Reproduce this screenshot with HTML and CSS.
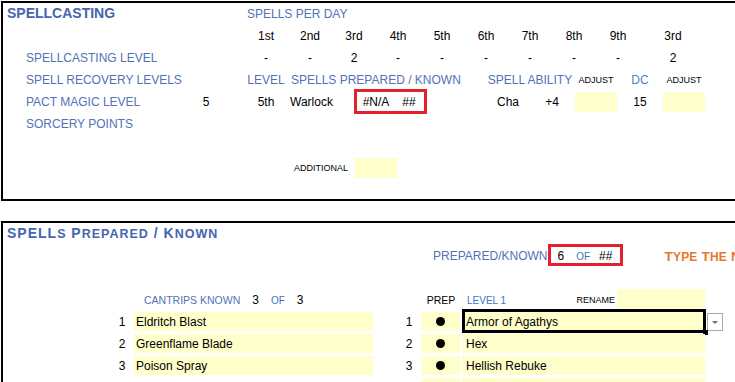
FILE: index.html
```html
<!DOCTYPE html>
<html lang="en">
<head>
    <meta charset="UTF-8">
    <meta name="viewport" content="width=device-width, initial-scale=1.0">
    <title>Spellcasting</title>
    <link rel="stylesheet" href="styles.css">
</head>
<body>
    <!-- Spellcasting block -->
    <section class="sheet spellcasting">
        <div class="row">
            <h1 class="title">SPELLCASTING</h1>
            <span class="head per-day">SPELLS PER DAY</span>
        </div>
        <div class="row">
            <span class="slot first">1st</span>
            <span class="slot">2nd</span>
            <span class="slot">3rd</span>
            <span class="slot">4th</span>
            <span class="slot">5th</span>
            <span class="slot">6th</span>
            <span class="slot">7th</span>
            <span class="slot">8th</span>
            <span class="slot">9th</span>
            <span class="pact-col">3rd</span>
        </div>
        <div class="row">
            <span class="label">SPELLCASTING LEVEL</span>
            <span class="slot first">-</span>
            <span class="slot">-</span>
            <span class="slot">2</span>
            <span class="slot">-</span>
            <span class="slot">-</span>
            <span class="slot">-</span>
            <span class="slot">-</span>
            <span class="slot">-</span>
            <span class="slot">-</span>
            <span class="pact-col">2</span>
        </div>
        <div class="row">
            <span class="label">SPELL RECOVERY LEVELS</span>
            <span class="head level">LEVEL</span>
            <span class="head known">SPELLS PREPARED / KNOWN</span>
            <span class="head ability">SPELL ABILITY</span>
            <span class="tiny adjust">ADJUST</span>
            <span class="head dc">DC</span>
            <span class="tiny adjust">ADJUST</span>
        </div>
        <div class="row">
            <span class="label">PACT MAGIC LEVEL</span>
            <span class="lone">5</span>
            <span class="slot first">5th</span>
            <span class="warlock">Warlock</span>
            <span class="flag">
                <span>#N/A</span>
                <span>##</span>
            </span>
            <span class="cha">Cha</span>
            <span class="slot">+4</span>
            <span class="input"></span>
            <span class="slot">15</span>
            <span class="input"></span>
        </div>
        <div class="row">
            <span class="label">SORCERY POINTS</span>
        </div>
        <div class="row extra">
            <span class="tiny additional">ADDITIONAL</span>
            <span class="input"></span>
        </div>
    </section>

    <!-- Spells prepared / known block -->
    <section class="sheet prepared">
        <div class="row">
            <h2 class="title">SPELL<small>S</small> P<small>REPARED</small> / K<small>NOWN</small></h2>
        </div>
        <div class="count-row">
            <span class="head">PREPARED/KNOWN</span>
            <span class="count">
                <span>6</span>
                <span class="of">OF</span>
                <span>##</span>
            </span>
            <span class="hint">T<small>YPE</small> T<small>HE</small> N<small>AME</small></span>
        </div>
        <div class="row"></div>
        <div class="row">
            <div class="cantrips">
                <span class="small-head">CANTRIPS KNOWN</span>
                <span>3</span>
                <span class="of">OF</span>
                <span>3</span>
            </div>
            <span class="prep-head">PREP</span>
            <div class="level-head">
                <span class="of">LEVEL 1</span>
                <span class="tiny rename">RENAME</span>
                <span class="input"></span>
            </div>
        </div>
        <div class="row">
            <span class="num">1</span>
            <span class="cell cantrip">Eldritch Blast</span>
            <span class="num right">1</span>
            <span class="cell prep"><i class="dot"></i></span>
            <span class="cell spell selected">Armor of Agathys</span>
            <span class="drop"></span>
        </div>
        <div class="row">
            <span class="num">2</span>
            <span class="cell cantrip">Greenflame Blade</span>
            <span class="num right">2</span>
            <span class="cell prep"><i class="dot"></i></span>
            <span class="cell spell">Hex</span>
        </div>
        <div class="row">
            <span class="num">3</span>
            <span class="cell cantrip">Poison Spray</span>
            <span class="num right">3</span>
            <span class="cell prep"><i class="dot"></i></span>
            <span class="cell spell">Hellish Rebuke</span>
        </div>
        <div class="row">
            <span class="cell prep"></span>
            <span class="cell spell"></span>
        </div>
    </section>
</body>
</html>
```

FILE: styles.css
```css
body {
    margin: 0;
    font-family: "Liberation Sans", Arial, sans-serif;
    font-size: 12px;
    color: #000;
    background: #fff;
    overflow: hidden;
}

/* Sheet boxes run past the right edge of the window */
.sheet {
    width: 780px;
    margin-left: 1px;
    border: 2px solid #000;
    border-right: none;
}

.spellcasting {
    margin-top: 1px;
    padding-bottom: 20px;
}

.prepared {
    margin-top: 20px;
    border-bottom: none;
}

.row {
    display: grid;
    height: 22px;
    align-items: center;
    white-space: nowrap;
}

.spellcasting .row {
    grid-template-columns: 23px 164px 32px 22px repeat(21, 22px) 1fr;
}

.prepared .row {
    grid-template-columns: 109px 20px 244px 22px 22px 42px 244px 20px 1fr;
}

.title {
    grid-column: 1 / 3;
    margin: 0 0 3px;
    padding-left: 4px;
    font-size: 14px;
    font-weight: bold;
    color: #4565ad;
}

.title small {
    font-size: 12.5px;
}

.head,
.label {
    color: #5272b6;
}

.label {
    grid-column: 2;
}

.tiny {
    font-size: 9px;
}

.of {
    font-size: 10px;
    color: #3b74c2;
}

/* spell slot columns */
.per-day {
    grid-column: 5 / span 10;
    padding-left: 3px;
}

.slot {
    grid-column-end: span 2;
    text-align: center;
}

.slot.first {
    grid-column-start: 5;
}

.pact-col {
    grid-column: 24;
    text-align: center;
}

.level {
    grid-column: 5 / span 2;
    text-align: center;
}

.known {
    grid-column: 7 / span 8;
    padding-left: 3px;
}

.ability {
    grid-column: 16 / span 4;
    text-align: center;
}

.adjust {
    grid-column-end: span 2;
    text-align: center;
    color: #000;
}

.dc {
    grid-column-end: span 2;
    text-align: center;
    color: #4f7fc0;
}

.lone {
    grid-column: 3;
    text-align: center;
}

.warlock {
    grid-column: 7 / span 3;
    padding-left: 2px;
}

.flag {
    grid-column: 10 / span 3;
    position: relative;
    display: grid;
    grid-template-columns: 44px 22px;
    text-align: center;
}

.flag::after {
    content: "";
    position: absolute;
    top: -6px;
    bottom: -5px;
    left: 0;
    right: -7px;
    border: 3px solid #e3202b;
}

.cha {
    grid-column: 16 / span 2;
    text-align: center;
}

.input {
    grid-column-end: span 2;
    align-self: stretch;
    margin: 1px;
    background: #ffffcc;
}

.extra {
    margin-top: 22px;
}

.additional {
    grid-column: 7 / span 3;
    text-align: center;
}

/* prepared / known */
.prepared .title {
    grid-column: 1 / 5;
    letter-spacing: 1px;
}

.count-row {
    display: flex;
    align-items: center;
    height: 22px;
    padding-left: 430px;
    white-space: nowrap;
}

.count-row > * {
    flex-shrink: 0;
}

.count {
    position: relative;
    display: flex;
    align-items: center;
    width: 75px;
    margin-left: 1px;
    padding-left: 9px;
    box-sizing: border-box;
}

.count .of {
    margin: 0 9px 0 12px;
}

.count::after {
    content: "";
    position: absolute;
    top: -5px;
    bottom: -3px;
    left: 0;
    right: 0;
    border: 3px solid #e3202b;
}

.hint {
    margin-left: 41px;
    font-size: 13.5px;
    font-weight: bold;
    letter-spacing: 0.2px;
    color: #e8772e;
}

.hint small {
    font-size: 12px;
}

.cantrips {
    grid-column: 3;
    display: flex;
    align-items: center;
    gap: 12px;
    padding-left: 12px;
}

.small-head {
    font-size: 10.5px;
    color: #5272b6;
}

.prep-head {
    grid-column: 6;
    text-align: center;
    font-size: 10.5px;
}

.level-head {
    grid-column: 7;
    display: flex;
    align-items: center;
    align-self: stretch;
    padding-left: 5px;
}

.rename {
    margin-left: auto;
    margin-right: 2px;
}

.level-head .input {
    width: 88px;
    margin: 0 1px 2px 0;
}

.num {
    grid-column: 2;
    text-align: center;
}

.num.right {
    grid-column: 5;
}

.cell {
    display: flex;
    align-items: center;
    align-self: stretch;
    margin: 1px 0 2px;
    background: #ffffcc;
}

.cantrip {
    grid-column: 3;
    margin-left: 2px;
    margin-right: 3px;
    padding-left: 2px;
}

.prep {
    grid-column: 6;
    justify-content: center;
    margin-left: 1px;
    margin-right: 2px;
}

.dot {
    width: 9px;
    height: 9px;
    border-radius: 50%;
    background: #000;
}

.spell {
    grid-column: 7;
    position: relative;
    margin-right: 1px;
    padding-left: 4px;
}

.selected::before {
    content: "";
    position: absolute;
    top: -3px;
    bottom: -2px;
    left: 0;
    right: -1px;
    border: 3px solid #000;
}

.selected::after {
    content: "";
    position: absolute;
    right: -3px;
    bottom: -4px;
    width: 5px;
    height: 5px;
    background: #000;
}

.drop {
    grid-column: 8;
    align-self: start;
    display: flex;
    align-items: center;
    justify-content: center;
    width: 16px;
    height: 18px;
    margin: 2px 0 0 1px;
    box-sizing: border-box;
    border: 1px solid #a8a8a8;
    background: #fff;
}

.drop::after {
    content: "";
    border-left: 3px solid transparent;
    border-right: 3px solid transparent;
    border-top: 3px solid #707070;
}
```
